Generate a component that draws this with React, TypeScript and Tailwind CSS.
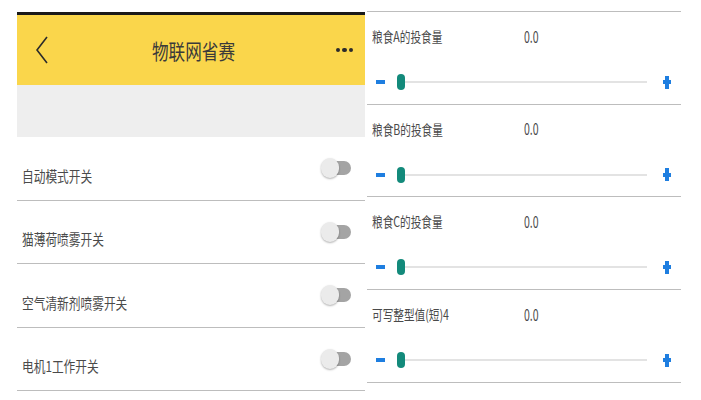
const switches = ['自动模式开关', '猫薄荷喷雾开关', '空气清新剂喷雾开关', '电机1工作开关']
const feeds = ['粮食A的投食量', '粮食B的投食量', '粮食C的投食量', '可写整型值(短)4']

function Toggle() {
  return (
    <div className="relative w-[30px] h-[20px] shrink-0">
      <div className="absolute right-0 top-[3px] w-[22px] h-[14px] rounded-full bg-[#a4a4a4]" />
      <div className="absolute left-0 top-0 w-[18px] h-[20px] rounded-full bg-[#ebebeb] shadow-[0_1px_2px_rgba(0,0,0,0.3)]" />
    </div>
  )
}

function Slider() {
  return (
    <div className="flex items-center h-[16px] pl-[9px] pr-[10px]">
      <div className="w-[9px] h-[4px] bg-[#1e7ee0]" />
      <div className="flex-1 flex items-center ml-[12px] mr-[16px]">
        <div className="w-[8px] h-[16px] rounded-full bg-[#138a7b] shrink-0" />
        <div className="flex-1 h-[2px] bg-[#e3e3e3]" />
      </div>
      <div className="relative w-[8px] h-[13px]">
        <div className="absolute left-[2px] top-0 w-[4px] h-[13px] bg-[#1e7ee0]" />
        <div className="absolute left-0 top-[4.5px] w-[8px] h-[4px] bg-[#1e7ee0]" />
      </div>
    </div>
  )
}

export default function App() {
  return (
    <div
      className="w-[701px] h-[400px] bg-white flex overflow-hidden"
      style={{ fontFamily: '"Noto Sans CJK SC", "Noto Sans", sans-serif' }}
    >
      <div className="ml-[17px] w-[348px] mt-[12px] flex flex-col">
        <div className="h-[3px] bg-[#1a1a1a]" />
        <div className="h-[70px] bg-[#fad64b] flex items-center pl-[18px] pr-[12px]">
          <svg width="14" height="30" viewBox="0 0 14 30" className="shrink-0">
            <path d="M12 2 L2 15 L12 28" fill="none" stroke="#2b2b2b" strokeWidth="1.6" />
          </svg>
          <div className="flex-1 flex justify-center pl-[2px]">
            <span className="inline-block text-[21px] text-[#3a3a3a] scale-x-[0.79] leading-none">物联网省赛</span>
          </div>
          <div className="flex gap-[2px] shrink-0">
            <div className="w-[4.5px] h-[4.5px] rounded-full bg-[#2b2b2b]" />
            <div className="w-[4.5px] h-[4.5px] rounded-full bg-[#2b2b2b]" />
            <div className="w-[4.5px] h-[4.5px] rounded-full bg-[#2b2b2b]" />
          </div>
        </div>
        <div className="h-[52px] bg-[#eeeeee]" />
        {switches.map((s) => (
          <div key={s} className="h-[63.5px] border-b border-[#bdbdbd] flex items-center justify-between pl-[5px] pr-[14px] pt-[14px]">
            <span className="inline-block origin-left text-[15px] text-[#4a4a4a] scale-x-[0.78] leading-none">{s}</span>
            <div className="-mt-[14px]">
              <Toggle />
            </div>
          </div>
        ))}
      </div>
      <div className="ml-[2px] w-[314px] mt-[11px] flex flex-col border-t border-[#bdbdbd]">
        {feeds.map((f) => (
          <div key={f} className="h-[92.7px] border-b border-[#bdbdbd] flex flex-col pt-[15px]">
            <div className="flex items-center pl-[5px] h-[16px]">
              <span className="w-[152px] inline-block">
                <span className="inline-block origin-left text-[14px] text-[#4a4a4a] scale-x-[0.76] leading-none">{f}</span>
              </span>
              <span className="inline-block origin-left text-[17px] text-[#4a4a4a] scale-x-[0.62] leading-none">0.0</span>
            </div>
            <div className="mt-[31px]">
              <Slider />
            </div>
          </div>
        ))}
      </div>
    </div>
  )
}
